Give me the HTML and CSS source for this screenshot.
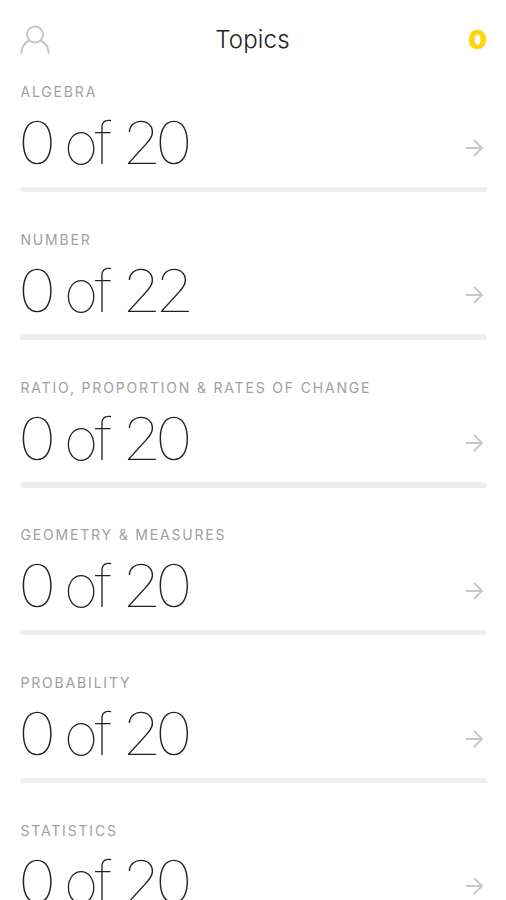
FILE: index.html
```html
<!DOCTYPE html>
<html lang="en">
<head>
  <meta charset="UTF-8">
  <meta name="viewport" content="width=device-width, initial-scale=1.0">
  <title>Topics</title>
  <link rel="stylesheet" href="styles.css">
</head>
<body>
  <header>
    <svg class="profile" viewBox="0 0 30 30">
      <circle cx="15" cy="9.5" r="8"/>
      <path d="M1.200 28C1.800 22 5 17.500 9.500 15.500M28.800 28C28.200 22 25 17.500 20.500 15.500"/>
    </svg>
    <h1>Topics</h1>
    <span class="points">0</span>
  </header>

  <main>
    <section class="topic">
      <h2>ALGEBRA</h2>
      <div class="row">
        <p class="score"><span class="done">0</span> <span class="of">of</span> <span class="total">20</span></p>
        <svg class="arrow" viewBox="0 0 18 18"><path d="M1 9h16M9 1l8 8-8 8"/></svg>
      </div>
      <div class="progress"></div>
    </section>
    <section class="topic">
      <h2>NUMBER</h2>
      <div class="row">
        <p class="score"><span class="done">0</span> <span class="of">of</span> <span class="total">22</span></p>
        <svg class="arrow" viewBox="0 0 18 18"><path d="M1 9h16M9 1l8 8-8 8"/></svg>
      </div>
      <div class="progress"></div>
    </section>
    <section class="topic">
      <h2>RATIO, PROPORTION &amp; RATES OF CHANGE</h2>
      <div class="row">
        <p class="score"><span class="done">0</span> <span class="of">of</span> <span class="total">20</span></p>
        <svg class="arrow" viewBox="0 0 18 18"><path d="M1 9h16M9 1l8 8-8 8"/></svg>
      </div>
      <div class="progress"></div>
    </section>
    <section class="topic">
      <h2>GEOMETRY &amp; MEASURES</h2>
      <div class="row">
        <p class="score"><span class="done">0</span> <span class="of">of</span> <span class="total">20</span></p>
        <svg class="arrow" viewBox="0 0 18 18"><path d="M1 9h16M9 1l8 8-8 8"/></svg>
      </div>
      <div class="progress"></div>
    </section>
    <section class="topic">
      <h2>PROBABILITY</h2>
      <div class="row">
        <p class="score"><span class="done">0</span> <span class="of">of</span> <span class="total">20</span></p>
        <svg class="arrow" viewBox="0 0 18 18"><path d="M1 9h16M9 1l8 8-8 8"/></svg>
      </div>
      <div class="progress"></div>
    </section>
    <section class="topic">
      <h2>STATISTICS</h2>
      <div class="row">
        <p class="score"><span class="done">0</span> <span class="of">of</span> <span class="total">20</span></p>
        <svg class="arrow" viewBox="0 0 18 18"><path d="M1 9h16M9 1l8 8-8 8"/></svg>
      </div>
      <div class="progress"></div>
    </section>
  </main>
</body>
</html>
```

FILE: styles.css
```css
body {
  font-family: Inter, sans-serif;
  margin: 0;
  height: 900px;
  overflow: hidden;
  background: #fff;
  color: #222;
}
header {
  display: grid;
  grid-template-columns: 60px 1fr 60px;
  align-items: center;
  height: 80px;
  padding: 0 19px 0 20px;
}
h1 {
  margin: -2px 2px 0 0;
  text-align: center;
  font-size: 24px;
  font-weight: 300;
  letter-spacing: 0.2px;
}
.profile {
  width: 30px;
  height: 30px;
  margin-top: -1px;
  fill: none;
  stroke: #c6c6c6;
  stroke-width: 2;
  stroke-linecap: round;
}
.points {
  justify-self: end;
  margin-top: -1px;
  color: #ffd60a;
  font-size: 26px;
  font-weight: 900;
  -webkit-text-stroke: 0.3px #ffd60a;
}
main {
  padding: 0 19px 0 20px;
}
.topic {
  height: 147.8px;
}
h2 {
  margin: 0;
  padding: 3px 0 0 0.5px;
  line-height: 18px;
  font-size: 14px;
  font-weight: 400;
  letter-spacing: 1.82px;
  color: #a0a0a0;
}
.row {
  display: flex;
  justify-content: space-between;
  height: 85.5px;
}
.score {
  display: flex;
  margin: 0;
  line-height: 83px;
  font-size: 59px;
  font-weight: 100;
}
/* digits run a little wider than the word between them */
.done {
  width: 46px;
  margin-left: -2px;
  transform: scaleX(1.1);
  transform-origin: left;
}
.of {
  width: 58px;
  letter-spacing: -3.5px;
}
.total {
  letter-spacing: -6px;
  transform: scaleX(1.08);
  transform-origin: left;
}
.arrow {
  width: 18px;
  height: 18px;
  margin: 37.5px 4px 0 0;
  fill: none;
  stroke: #c6c6c6;
  stroke-width: 1.8;
}
.progress {
  height: 5.5px;
  border-radius: 3px;
  background: #eee;
}
```
